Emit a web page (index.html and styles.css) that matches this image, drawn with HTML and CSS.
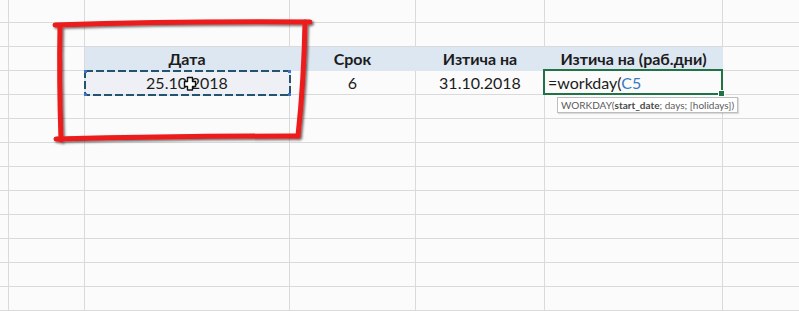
FILE: index.html
```html
<!DOCTYPE html>
<html lang="bg">
<head>
<meta charset="utf-8">
<title>Workday</title>
<link rel="stylesheet" href="styles.css">
</head>
<body>
<div class="sheet">
  <div class="c"></div><div class="c"></div><div class="c"></div><div class="c"></div><div class="c"></div><div class="c"></div><div class="c last"></div>
  <div class="c"></div><div class="c"></div><div class="c"></div><div class="c"></div><div class="c"></div><div class="c"></div><div class="c last"></div>
  <div class="c"></div><div class="c"></div>
  <div class="c hd">Дата</div><div class="c hd">Срок</div><div class="c hd">Изтича на</div><div class="c hd">Изтича на (раб.дни)</div>
  <div class="c last"></div>
  <div class="c"></div><div class="c"></div>
  <div class="c num copied">25.10.2018
    <svg class="ants" width="207" height="26" viewBox="0 0 207 26">
      <rect x="1" y="1" width="205" height="24" fill="none" stroke="#dfe6ee" stroke-width="2"/>
      <rect x="1" y="1" width="205" height="24" fill="none" stroke="#23536f" stroke-width="2" stroke-dasharray="8 3"/>
      <rect x="-1" y="-1" width="4" height="4" fill="#3f72c9"/>
      <rect x="204" y="-1" width="4" height="4" fill="#3f72c9"/>
      <rect x="-1" y="23" width="4" height="4" fill="#3f72c9"/>
      <rect x="204" y="23" width="4" height="4" fill="#3f72c9"/>
    </svg>
    <svg class="cursor" width="14" height="15" viewBox="0 0 14 15">
      <path d="M4.5 1.5h5v4h3v5h-3v3.5h-5v-3.5h-3v-5h3z" fill="#ffffff" stroke="#111" stroke-width="1.4" stroke-linejoin="round"/>
    </svg>
  </div>
  <div class="c num">6</div><div class="c num">31.10.2018</div>
  <div class="c edit">=workday(<span class="ref">C5</span>
    <span class="fill-handle"></span>
    <div class="tip">WORKDAY(<b>start_date</b>; days; [holidays])</div>
  </div>
  <div class="c last"></div>
  <div class="c"></div><div class="c"></div><div class="c"></div><div class="c"></div><div class="c"></div><div class="c"></div><div class="c last"></div>
  <div class="c"></div><div class="c"></div><div class="c"></div><div class="c"></div><div class="c"></div><div class="c"></div><div class="c last"></div>
  <div class="c"></div><div class="c"></div><div class="c"></div><div class="c"></div><div class="c"></div><div class="c"></div><div class="c last"></div>
  <div class="c"></div><div class="c"></div><div class="c"></div><div class="c"></div><div class="c"></div><div class="c"></div><div class="c last"></div>
  <div class="c"></div><div class="c"></div><div class="c"></div><div class="c"></div><div class="c"></div><div class="c"></div><div class="c last"></div>
  <div class="c"></div><div class="c"></div><div class="c"></div><div class="c"></div><div class="c"></div><div class="c"></div><div class="c last"></div>
  <div class="c"></div><div class="c"></div><div class="c"></div><div class="c"></div><div class="c"></div><div class="c"></div><div class="c last"></div>
  <div class="c"></div><div class="c"></div><div class="c"></div><div class="c"></div><div class="c"></div><div class="c"></div><div class="c last"></div>
  <div class="c"></div><div class="c"></div><div class="c"></div><div class="c"></div><div class="c"></div><div class="c"></div><div class="c last"></div>
</div>
<svg class="marker" width="799" height="311" viewBox="0 0 799 311">
  <defs>
    <filter id="sh" x="-10%" y="-10%" width="120%" height="120%">
      <feDropShadow dx="1.5" dy="1.5" stdDeviation="1" flood-color="#000" flood-opacity="0.6"/>
    </filter>
  </defs>
  <g fill="none" stroke="#ec1b1b" stroke-width="5" stroke-linecap="round" stroke-linejoin="round" filter="url(#sh)">
    <path d="M55 25 Q180 21 310 22"/>
    <path d="M60 26 Q59 80 61 140"/>
    <path d="M305 22 Q304 80 298 136"/>
    <path d="M56 139 Q180 136 298 136"/>
  </g>
</svg>
</body>
</html>
```
FILE: styles.css
```css
html, body {
  margin: 0;
  padding: 0;
}
body {
  width: 799px;
  height: 311px;
  overflow: hidden;
  position: relative;
  background: #fbfbfb;
  font-family: Lato, "Noto Sans", "DejaVu Sans", sans-serif;
  color: #1c1c1c;
}
.sheet {
  display: grid;
  grid-template-columns: 9px 76px 205px 126px 129px 178px 1fr;
  grid-template-rows: 23px;
  grid-auto-rows: 24px;
}
.c {
  box-sizing: border-box;
  border-right: 1px solid #dadada;
  border-bottom: 1px solid #dadada;
  font-size: 16px;
  line-height: 23px;
  white-space: nowrap;
}
.c.last {
  border-right: none;
}
.hd {
  background: #dde7f2;
  border-color: #dde7f2;
  font-weight: 700;
  text-align: center;
}
.num {
  text-align: center;
}
.copied {
  position: relative;
  background: #eef0f5;
}
.ants {
  position: absolute;
  left: -1px;
  top: -1px;
}
.cursor {
  position: absolute;
  left: 98px;
  top: 5px;
}
.edit {
  position: relative;
  padding-left: 3px;
}
.edit::before {
  content: "";
  position: absolute;
  left: -2px;
  top: -2px;
  right: -1px;
  bottom: -1px;
  border: 2px solid #217346;
}
.ref {
  color: #3a79c0;
}
.fill-handle {
  position: absolute;
  right: -3px;
  bottom: -3px;
  width: 5px;
  height: 5px;
  background: #217346;
  border: 1px solid #fff;
}
.tip {
  position: absolute;
  left: 12px;
  top: 26px;
  padding: 0 3px;
  background: #ffffff;
  border: 1px solid #bdbdbd;
  box-shadow: 1px 1px 1px rgba(0,0,0,0.12);
  font-size: 10px;
  line-height: 14px;
  color: #5a5a5a;
  z-index: 2;
}
.tip b {
  font-weight: 700;
  color: #4a4a4a;
}
.marker {
  position: absolute;
  left: 0;
  top: 0;
  pointer-events: none;
  z-index: 5;
}
```
